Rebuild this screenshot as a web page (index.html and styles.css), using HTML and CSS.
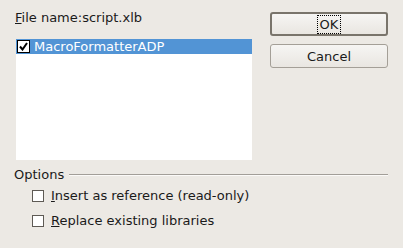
FILE: index.html
```html
<!DOCTYPE html>
<html lang="en">
<head>
    <meta charset="UTF-8">
    <title>Import Libraries</title>
    <link rel="stylesheet" href="styles.css">
</head>
<body>
    <div class="dialog">
        <div class="top">
            <section class="file-column">
                <label class="file-label"><u>F</u>ile name:script.xlb</label>
                <ul class="lib-list">
                    <li class="lib-item selected">
                        <span class="list-check">
                            <svg width="9" height="9" viewBox="0 0 9 9"><path d="M1 4.5 L3.5 7.5 L8 1" fill="none" stroke="#000" stroke-width="2"/></svg>
                        </span>
                        <span class="lib-name">MacroFormatterADP</span>
                    </li>
                </ul>
            </section>
            <aside class="buttons">
                <button class="btn btn-default"><span class="focus">OK</span></button>
                <button class="btn">Cancel</button>
            </aside>
        </div>

        <div class="options">
            <div class="options-title">Options</div>
            <label class="option"><span class="box"></span><span><u>I</u>nsert as reference (read-only)</span></label>
            <label class="option"><span class="box"></span><span><u>R</u>eplace existing libraries</span></label>
        </div>
    </div>
</body>
</html>
```

FILE: styles.css
```css
* {
    margin: 0;
    padding: 0;
    box-sizing: border-box;
}

body {
    width: 403px;
    height: 248px;
    background: #ece9e4;
    font-family: 'DejaVu Sans', Verdana, sans-serif;
    font-size: 13px;
    color: #1a1a1a;
    overflow: hidden;
}

.dialog {
    padding: 10px 15px 0 14px;
}

.top {
    display: flex;
    justify-content: space-between;
}

.file-column {
    display: flex;
    flex-direction: column;
    width: 238px;
}

.file-label {
    line-height: 15px;
    height: 15px;
    margin-bottom: 14px;
    padding-left: 1px;
}

.lib-list {
    list-style: none;
    background: #fff;
    height: 121px;
    margin-left: 2px;
}

.lib-item {
    display: flex;
    align-items: center;
    height: 15px;
    gap: 4px;
    padding-left: 1px;
}

.lib-item.selected {
    background: #5294d5;
    color: #fff;
}

.list-check {
    display: inline-flex;
    align-items: center;
    justify-content: center;
    width: 13px;
    height: 13px;
    background: #fff;
    border: 1px solid #000;
}

.buttons {
    display: flex;
    flex-direction: column;
    gap: 8px;
    width: 118px;
    padding-top: 2px;
}

.btn {
    display: flex;
    align-items: center;
    justify-content: center;
    height: 24px;
    font-family: inherit;
    font-size: 13px;
    color: #1a1a1a;
    background: linear-gradient(#f6f5f3, #e9e6e1);
    border: 1px solid #a49f97;
    border-radius: 3px;
}

.btn-default {
    border: 2px solid #79746b;
    border-radius: 3px;
}

.focus {
    padding: 1px 2px;
    line-height: 15px;
    outline: 1px dotted #000;
    outline-offset: 0;
}

.options {
    margin-top: 7px;
}

.options-title {
    display: flex;
    align-items: center;
    gap: 5px;
    width: 374px;
    line-height: 15px;
    margin-bottom: 6px;
}

.options-title::after {
    content: '';
    flex: 1;
    border-top: 1px solid #a29e98;
    border-bottom: 1px solid #fbfaf8;
    margin-top: 1px;
}

.option {
    display: flex;
    align-items: center;
    gap: 7px;
    height: 15px;
    margin-left: 18px;
    margin-bottom: 10px;
}

.box {
    width: 12px;
    height: 12px;
    background: #fff;
    border: 1px solid #5e5a54;
}
```
